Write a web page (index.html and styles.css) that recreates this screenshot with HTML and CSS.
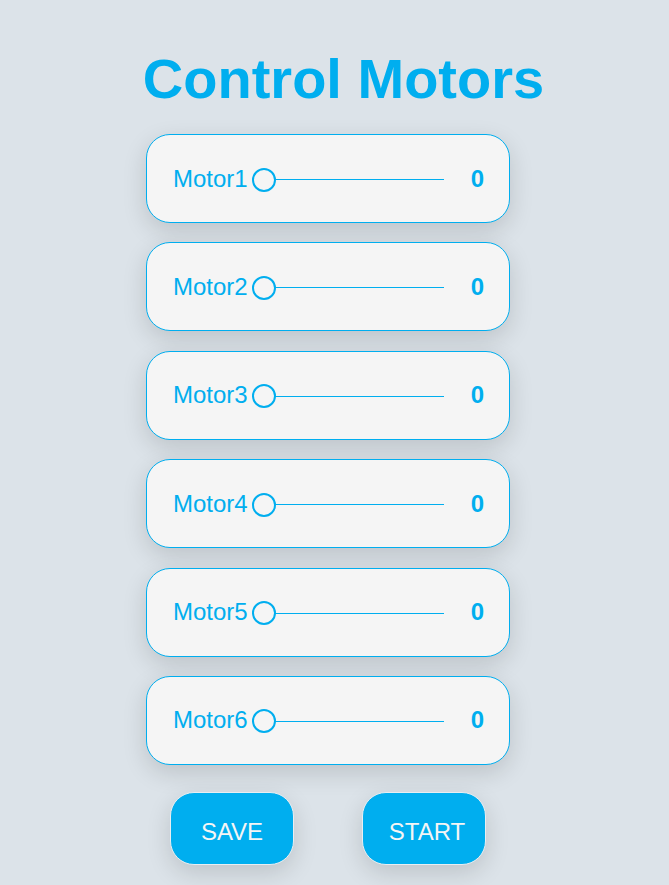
FILE: index.html
```html
<!DOCTYPE html>
<html lang="en">
<head>
  <meta charset="UTF-8">
  <meta name="viewport" content="width=device-width, initial-scale=1">
  <title>Control Motors</title>
  <link rel="stylesheet" href="styles.css">
</head>
<body>
  <div class="page">
    <h1 class="title">Control Motors</h1>

    <!-- One card per motor: name, slider, current value -->
    <div class="motor-list">
      <div class="motor">
        <label class="motor-name" for="motor1">Motor1</label>
        <input class="motor-slider" type="range" id="motor1" min="0" max="180" value="0">
        <span class="motor-value">0</span>
      </div>
      <div class="motor">
        <label class="motor-name" for="motor2">Motor2</label>
        <input class="motor-slider" type="range" id="motor2" min="0" max="180" value="0">
        <span class="motor-value">0</span>
      </div>
      <div class="motor">
        <label class="motor-name" for="motor3">Motor3</label>
        <input class="motor-slider" type="range" id="motor3" min="0" max="180" value="0">
        <span class="motor-value">0</span>
      </div>
      <div class="motor">
        <label class="motor-name" for="motor4">Motor4</label>
        <input class="motor-slider" type="range" id="motor4" min="0" max="180" value="0">
        <span class="motor-value">0</span>
      </div>
      <div class="motor">
        <label class="motor-name" for="motor5">Motor5</label>
        <input class="motor-slider" type="range" id="motor5" min="0" max="180" value="0">
        <span class="motor-value">0</span>
      </div>
      <div class="motor">
        <label class="motor-name" for="motor6">Motor6</label>
        <input class="motor-slider" type="range" id="motor6" min="0" max="180" value="0">
        <span class="motor-value">0</span>
      </div>
    </div>

    <div class="actions">
      <button class="action-btn" id="save-btn">SAVE</button>
      <button class="action-btn" id="start-btn">START</button>
    </div>
  </div>
</body>
</html>
```

FILE: styles.css
```css
/* General */
body {
  margin: 0;
  background: #dce3e9;
  font-family: "Liberation Sans", Arial, sans-serif;
  color: #00aeef;
}
.page {
  display: flex;
  flex-direction: column;
  align-items: center;
  padding: 47px 0 20px;
}
.title {
  margin: 0 0 23px;
  padding-left: 18px;
  font-size: 56px;
  line-height: 64px;
  font-weight: bold;
}
/* Motor cards */
.motor-list {
  display: flex;
  flex-direction: column;
  gap: 19.4px;
  margin-right: 13px;
}
.motor {
  box-sizing: border-box;
  width: 364px;
  height: 89px;
  display: flex;
  align-items: center;
  padding: 0 25px 0 26px;
  background: #f5f5f5;
  border: 1px solid #00aeef;
  border-radius: 24px;
  box-shadow: 0 8px 24px rgba(0, 0, 0, 0.14);
}
.motor-name {
  font-size: 24px;
}
.motor-slider {
  -webkit-appearance: none;
  appearance: none;
  width: 192px;
  height: 24px;
  margin: 2px 0 0 4px;
  background: transparent;
}
.motor-slider::-webkit-slider-runnable-track {
  height: 1px;
  background: #00aeef;
}
.motor-slider::-webkit-slider-thumb {
  -webkit-appearance: none;
  box-sizing: border-box;
  width: 24px;
  height: 24px;
  margin-top: -11.5px;
  border: 2px solid #00aeef;
  border-radius: 50%;
  background: #f5f5f5;
  cursor: pointer;
}
.motor-value {
  margin-left: 27px;
  font-size: 24px;
  font-weight: bold;
}
/* Buttons */
.actions {
  display: flex;
  gap: 68px;
  margin-top: 27px;
  margin-right: 13px;
}
.action-btn {
  width: 124px;
  height: 73px;
  padding: 7px 0 0;
  background: #00aeef;
  border: 1px solid #e8eef2;
  border-radius: 24px;
  color: #f5f5f5;
  font-family: "Liberation Sans", Arial, sans-serif;
  font-size: 24px;
  cursor: pointer;
  box-shadow: 0 8px 24px rgba(0, 0, 0, 0.14);
}
#start-btn {
  padding-left: 6px;
}
```
